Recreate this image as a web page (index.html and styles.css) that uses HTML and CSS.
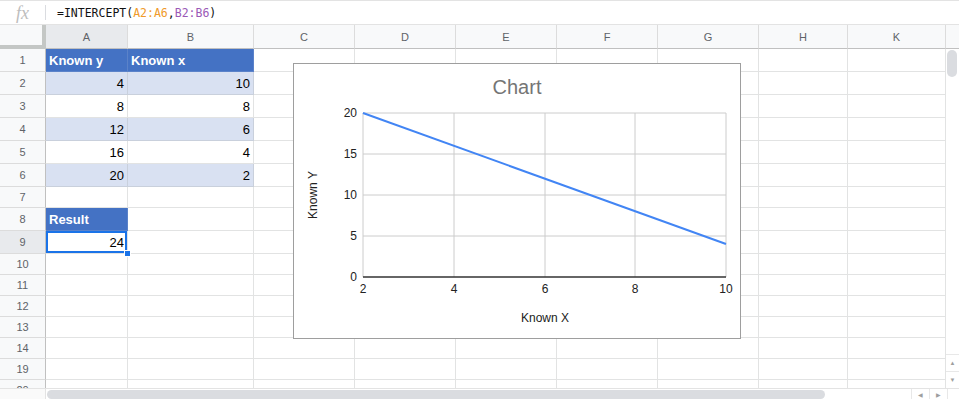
FILE: index.html
```html
<!DOCTYPE html>
<html lang="en">
<head>
    <meta charset="UTF-8">
    <meta name="viewport" content="width=device-width, initial-scale=1.0">
    <title>INTERCEPT - Sheet</title>
    <link rel="stylesheet" href="styles.css">
</head>
<body>
    <div class="formula-bar">
        <span class="fx">fx</span>
        <span class="fx-sep"></span>
        <span class="formula">=INTERCEPT(<span class="ref-a">A2:A6</span>,<span class="ref-b">B2:B6</span>)</span>
    </div>

    <div class="sheet">
        <div class="grid">
            <div class="row col-head">
                <div class="corner"></div>
                <div class="ch active">A</div>
                <div class="ch">B</div>
                <div class="ch">C</div>
                <div class="ch">D</div>
                <div class="ch">E</div>
                <div class="ch">F</div>
                <div class="ch">G</div>
                <div class="ch">H</div>
                <div class="ch">K</div>
            </div>

            <div class="row tall">
                <div class="rh">1</div>
                <div class="c hd">Known y</div><div class="c hd">Known x</div>
                <div class="c"></div><div class="c"></div><div class="c"></div><div class="c"></div><div class="c"></div><div class="c"></div><div class="c"></div>
            </div>
            <div class="row tall">
                <div class="rh">2</div>
                <div class="c num band">4</div><div class="c num band">10</div>
                <div class="c"></div><div class="c"></div><div class="c"></div><div class="c"></div><div class="c"></div><div class="c"></div><div class="c"></div>
            </div>
            <div class="row tall">
                <div class="rh">3</div>
                <div class="c num">8</div><div class="c num">8</div>
                <div class="c"></div><div class="c"></div><div class="c"></div><div class="c"></div><div class="c"></div><div class="c"></div><div class="c"></div>
            </div>
            <div class="row tall">
                <div class="rh">4</div>
                <div class="c num band">12</div><div class="c num band">6</div>
                <div class="c"></div><div class="c"></div><div class="c"></div><div class="c"></div><div class="c"></div><div class="c"></div><div class="c"></div>
            </div>
            <div class="row tall">
                <div class="rh">5</div>
                <div class="c num">16</div><div class="c num">4</div>
                <div class="c"></div><div class="c"></div><div class="c"></div><div class="c"></div><div class="c"></div><div class="c"></div><div class="c"></div>
            </div>
            <div class="row tall">
                <div class="rh">6</div>
                <div class="c num band">20</div><div class="c num band">2</div>
                <div class="c"></div><div class="c"></div><div class="c"></div><div class="c"></div><div class="c"></div><div class="c"></div><div class="c"></div>
            </div>
            <div class="row">
                <div class="rh">7</div>
                <div class="c"></div><div class="c"></div>
                <div class="c"></div><div class="c"></div><div class="c"></div><div class="c"></div><div class="c"></div><div class="c"></div><div class="c"></div>
            </div>
            <div class="row tall">
                <div class="rh">8</div>
                <div class="c hd">Result</div><div class="c"></div>
                <div class="c"></div><div class="c"></div><div class="c"></div><div class="c"></div><div class="c"></div><div class="c"></div><div class="c"></div>
            </div>
            <div class="row tall">
                <div class="rh active">9</div>
                <div class="c num sel">24</div><div class="c"></div>
                <div class="c"></div><div class="c"></div><div class="c"></div><div class="c"></div><div class="c"></div><div class="c"></div><div class="c"></div>
            </div>
            <div class="row">
                <div class="rh">10</div>
                <div class="c"></div><div class="c"></div>
                <div class="c"></div><div class="c"></div><div class="c"></div><div class="c"></div><div class="c"></div><div class="c"></div><div class="c"></div>
            </div>
            <div class="row">
                <div class="rh">11</div>
                <div class="c"></div><div class="c"></div>
                <div class="c"></div><div class="c"></div><div class="c"></div><div class="c"></div><div class="c"></div><div class="c"></div><div class="c"></div>
            </div>
            <div class="row">
                <div class="rh">12</div>
                <div class="c"></div><div class="c"></div>
                <div class="c"></div><div class="c"></div><div class="c"></div><div class="c"></div><div class="c"></div><div class="c"></div><div class="c"></div>
            </div>
            <div class="row">
                <div class="rh">13</div>
                <div class="c"></div><div class="c"></div>
                <div class="c"></div><div class="c"></div><div class="c"></div><div class="c"></div><div class="c"></div><div class="c"></div><div class="c"></div>
            </div>
            <div class="row">
                <div class="rh">14</div>
                <div class="c"></div><div class="c"></div>
                <div class="c"></div><div class="c"></div><div class="c"></div><div class="c"></div><div class="c"></div><div class="c"></div><div class="c"></div>
            </div>
            <div class="row">
                <div class="rh">19</div>
                <div class="c"></div><div class="c"></div>
                <div class="c"></div><div class="c"></div><div class="c"></div><div class="c"></div><div class="c"></div><div class="c"></div><div class="c"></div>
            </div>
            <div class="row">
                <div class="rh">20</div>
                <div class="c"></div><div class="c"></div>
                <div class="c"></div><div class="c"></div><div class="c"></div><div class="c"></div><div class="c"></div><div class="c"></div><div class="c"></div>
            </div>

            <!-- chart floats over the cells -->
            <div class="chart">
                <svg width="446" height="274" viewBox="0 0 446 274">
                    <text class="chart-title" x="223" y="30">Chart</text>

                    <g class="gridlines">
                        <line x1="69" y1="49" x2="432" y2="49"/>
                        <line x1="69" y1="90" x2="432" y2="90"/>
                        <line x1="69" y1="131" x2="432" y2="131"/>
                        <line x1="69" y1="172" x2="432" y2="172"/>
                        <line x1="69" y1="49" x2="69" y2="213"/>
                        <line x1="160" y1="49" x2="160" y2="213"/>
                        <line x1="251" y1="49" x2="251" y2="213"/>
                        <line x1="341" y1="49" x2="341" y2="213"/>
                        <line x1="432" y1="49" x2="432" y2="213"/>
                    </g>
                    <line class="baseline" x1="69" y1="213" x2="432" y2="213"/>

                    <g class="y-labels">
                        <text x="63" y="53">20</text>
                        <text x="63" y="94">15</text>
                        <text x="63" y="135">10</text>
                        <text x="63" y="176">5</text>
                        <text x="63" y="217">0</text>
                    </g>
                    <g class="x-labels">
                        <text x="69" y="229">2</text>
                        <text x="160" y="229">4</text>
                        <text x="251" y="229">6</text>
                        <text x="341" y="229">8</text>
                        <text x="432" y="229">10</text>
                    </g>

                    <polyline class="series" points="69,49 432,180"/>

                    <text class="axis-title" x="251" y="258">Known X</text>
                    <text class="axis-title" x="23" y="131" transform="rotate(-90 23 131)">Known Y</text>
                </svg>
            </div>
        </div>

        <div class="vscroll">
            <div class="vscroll-head"></div>
            <div class="vscroll-track">
                <div class="vthumb"></div>
            </div>
            <div class="vbtn">&#9650;</div>
            <div class="vbtn">&#9660;</div>
        </div>
    </div>

    <div class="hscroll">
        <div class="hscroll-gap"></div>
        <div class="hscroll-track">
            <div class="hthumb"></div>
        </div>
        <div class="hbtn">&#9664;</div>
        <div class="hbtn">&#9654;</div>
        <div class="hscroll-end"></div>
    </div>
</body>
</html>
```

FILE: styles.css
```css
body {
    font-family: 'Liberation Sans', Arial, sans-serif;
    background: #fff;
    color: #000;
    margin: 0;
    padding: 0;
    width: 959px;
    height: 399px;
    overflow: hidden;
}

/* formula bar */
.formula-bar {
    height: 23px;
    border-top: 1px solid #e3e3e3;
    border-bottom: 1px solid #e3e3e3;
    display: flex;
    align-items: center;
}

.fx {
    width: 45px;
    text-align: center;
    font-family: 'Liberation Serif', serif;
    font-style: italic;
    font-size: 18px;
    color: #bdbdbd;
    line-height: 1;
}

.fx-sep {
    width: 1px;
    height: 15px;
    background: #dadce0;
}

.formula {
    padding-left: 11px;
    font-family: 'DejaVu Sans Mono', monospace;
    font-size: 11.5px;
    color: #111;
}

.ref-a {
    color: #f09a2a;
}

.ref-b {
    color: #9b59b6;
}

/* sheet */
.sheet {
    display: flex;
    height: 363px;
}

.grid {
    position: relative;
    width: 946px;
    overflow: hidden;
}

.row {
    display: grid;
    grid-template-columns: 46px 82px 126px 101px 101px 101px 101px 101px 89px 98px;
    height: 21px;
}

.row.tall {
    height: 23px;
}

.row.col-head {
    height: 24px;
}

.row > div {
    box-sizing: border-box;
    border-right: 1px solid #e2e3e3;
    border-bottom: 1px solid #e2e3e3;
}

.corner {
    background: #f8f9fa;
    border-right: 4px solid #c4c7c5 !important;
    border-bottom: 4px solid #c4c7c5 !important;
}

.ch {
    background: #f8f9fa;
    border-bottom-color: #c0c0c0 !important;
    border-right-color: #dcdcdc !important;
    color: #5f6368;
    font-size: 11px;
    display: flex;
    align-items: center;
    justify-content: center;
}

.rh {
    background: #f8f9fa;
    border-right-color: #c0c0c0 !important;
    border-bottom-color: #dcdcdc !important;
    color: #5f6368;
    font-size: 11px;
    display: flex;
    align-items: center;
    justify-content: center;
}

.ch.active, .rh.active {
    background: #e8eaed;
}

.c {
    font-size: 13px;
    padding: 0 3px;
    display: flex;
    align-items: center;
    white-space: nowrap;
}

.c.num {
    justify-content: flex-end;
}

.c.hd {
    background: #4472c4;
    color: #fff;
    font-weight: bold;
    border-right-color: #5b82c9;
    border-bottom-color: #5b82c9;
}

.c.band {
    background: #d9e1f2;
    border-right-color: #c9d0dc;
    border-bottom-color: #c9d0dc;
}

.c.sel {
    position: relative;
    box-shadow: inset 0 0 0 2px #1a73e8;
    z-index: 2;
}

.c.sel::after {
    content: '';
    position: absolute;
    right: -4px;
    bottom: -4px;
    width: 5px;
    height: 5px;
    background: #1a73e8;
    border: 1px solid #fff;
}

/* chart */
.chart {
    position: absolute;
    left: 293px;
    top: 38px;
    width: 448px;
    height: 276px;
    box-sizing: border-box;
    border: 1px solid #9e9e9e;
    background: #fff;
    z-index: 3;
}

.chart svg {
    display: block;
    font-family: 'Liberation Sans', Arial, sans-serif;
}

.chart-title {
    font-size: 20px;
    fill: #757575;
    text-anchor: middle;
}

.gridlines line {
    stroke: #cccccc;
    stroke-width: 1;
}

.baseline {
    stroke: #333;
    stroke-width: 1.5;
}

.y-labels text {
    font-size: 12px;
    fill: #222;
    text-anchor: end;
}

.x-labels text {
    font-size: 12px;
    fill: #222;
    text-anchor: middle;
}

.series {
    fill: none;
    stroke: #4285f4;
    stroke-width: 2;
}

.axis-title {
    font-size: 12px;
    fill: #222;
    text-anchor: middle;
}

/* scrollbars */
.vscroll {
    width: 13px;
    display: flex;
    flex-direction: column;
    background: #fff;
}

.vscroll-head {
    height: 24px;
    box-sizing: border-box;
    background: #f8f9fa;
    border-bottom: 1px solid #c0c0c0;
}

.vscroll-track {
    flex: 1;
    padding: 1px 2px 0 1px;
}

.vthumb {
    height: 27px;
    background: #dadce0;
    border-radius: 5px;
}

.vbtn, .hbtn {
    color: #9e9e9e;
    font-size: 6px;
    display: flex;
    align-items: center;
    justify-content: center;
}

.vbtn {
    height: 16px;
    border-top: 1px solid #e8e8e8;
}

.hscroll {
    display: flex;
    height: 11px;
    border-top: 1px solid #e3e3e3;
    box-sizing: border-box;
}

.hscroll-gap {
    width: 46px;
    box-sizing: border-box;
    border-right: 1px solid #e3e3e3;
    background: #fafafa;
}

.hscroll-track {
    width: 864px;
    padding: 1px 0 0 1px;
}

.hthumb {
    width: 778px;
    height: 9px;
    background: #dadce0;
    border-radius: 5px;
}

.hbtn {
    width: 17px;
    border-left: 1px solid #e8e8e8;
}

.hscroll-end {
    flex: 1;
    border-left: 1px solid #e8e8e8;
}
```
